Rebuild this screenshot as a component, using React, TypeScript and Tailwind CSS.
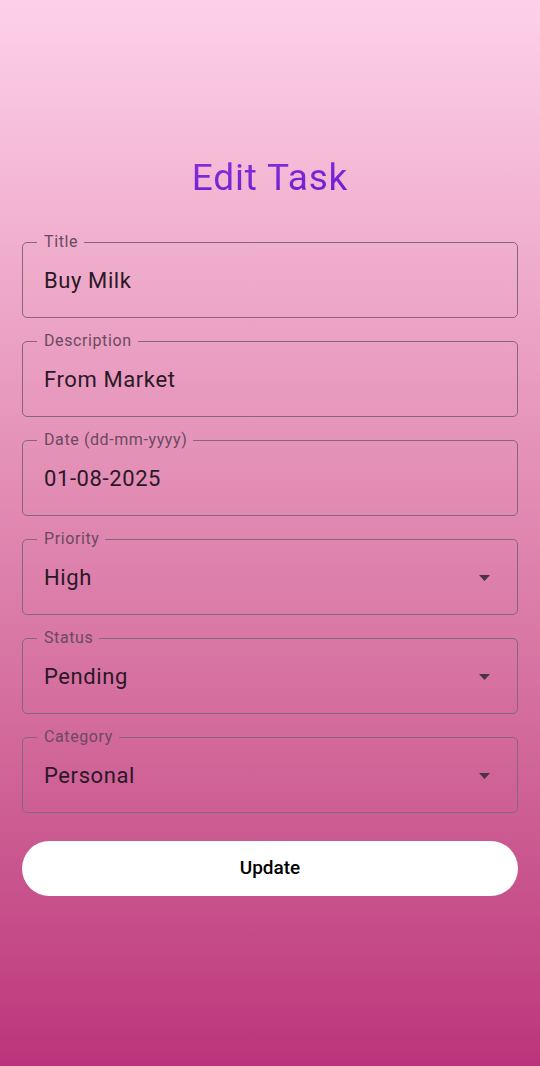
import { useState } from 'react'

type Field = {
    label: string
    value: string
    select?: boolean
}

const fields: Field[] = [
    { label: 'Title', value: 'Buy Milk' },
    { label: 'Description', value: 'From Market' },
    { label: 'Date (dd-mm-yyyy)', value: '01-08-2025' },
    { label: 'Priority', value: 'High', select: true },
    { label: 'Status', value: 'Pending', select: true },
    { label: 'Category', value: 'Personal', select: true },
]

function OutlinedField({ label, value, select }: Field) {
    return (
        <fieldset className="rounded-[5px] border-[1.5px] border-[#84677b] pl-[14px] pr-[27px] pt-[16px] pb-[22px] min-w-0">
            <legend className="pl-[7px] pr-[6px] text-[16px] leading-[18px] tracking-[0.6px] text-[#6b4a60]">
                {label}
            </legend>
            <div className="flex items-center justify-between">
                <span className="pl-[7px] text-[22px] leading-[28px] tracking-[0.6px] text-[#2b1826]">
                    {value}
                </span>
                {select && (
                    <svg width="11" height="6" viewBox="0 0 11 6">
                        <path d="M0 0h11L5.5 6z" fill="#4a3443" />
                    </svg>
                )}
            </div>
        </fieldset>
    )
}

export default function App() {
    const [values] = useState(fields)

    return (
        <div
            className="min-h-[1066px] w-full bg-gradient-to-b from-[#fdd1e7] to-[#bb347b] px-[22px] pt-[156px]"
            style={{ fontFamily: 'Roboto, "Noto Sans", sans-serif' }}
        >
            <h1 className="text-center text-[37px] leading-[44px] tracking-[0.8px] font-normal bg-gradient-to-br from-[#9d2ee0] to-[#5a12cc] bg-clip-text text-transparent">
                Edit Task
            </h1>

            <div className="mt-[33px] flex flex-col gap-[14px]">
                {values.map((f) => (
                    <OutlinedField key={f.label} {...f} />
                ))}
            </div>

            <button
                type="button"
                className="mt-[28px] h-[55px] w-full rounded-full bg-white text-[19px] font-medium text-black"
            >
                Update
            </button>
        </div>
    )
}
